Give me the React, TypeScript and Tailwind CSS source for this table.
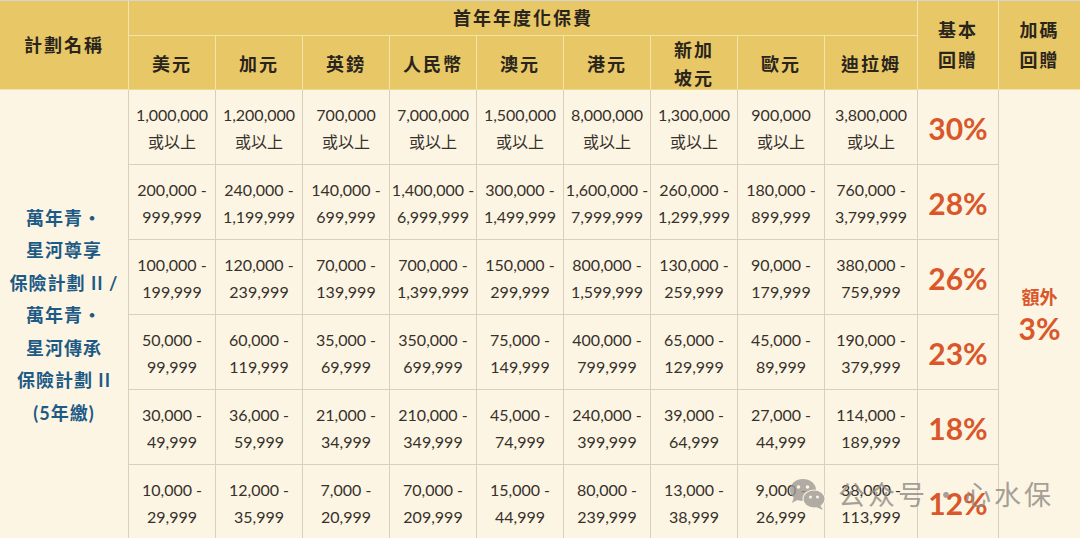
import React from "react";

const amounts: string[][] = [
  ["1,000,000|或以上", "1,200,000|或以上", "700,000|或以上", "7,000,000|或以上", "1,500,000|或以上", "8,000,000|或以上", "1,300,000|或以上", "900,000|或以上", "3,800,000|或以上"],
  ["200,000 -|999,999", "240,000 -|1,199,999", "140,000 -|699,999", "1,400,000 -|6,999,999", "300,000 -|1,499,999", "1,600,000 -|7,999,999", "260,000 -|1,299,999", "180,000 -|899,999", "760,000 -|3,799,999"],
  ["100,000 -|199,999", "120,000 -|239,999", "70,000 -|139,999", "700,000 -|1,399,999", "150,000 -|299,999", "800,000 -|1,599,999", "130,000 -|259,999", "90,000 -|179,999", "380,000 -|759,999"],
  ["50,000 -|99,999", "60,000 -|119,999", "35,000 -|69,999", "350,000 -|699,999", "75,000 -|149,999", "400,000 -|799,999", "65,000 -|129,999", "45,000 -|89,999", "190,000 -|379,999"],
  ["30,000 -|49,999", "36,000 -|59,999", "21,000 -|34,999", "210,000 -|349,999", "45,000 -|74,999", "240,000 -|399,999", "39,000 -|64,999", "27,000 -|44,999", "114,000 -|189,999"],
  ["10,000 -|29,999", "12,000 -|35,999", "7,000 -|20,999", "70,000 -|209,999", "15,000 -|44,999", "80,000 -|239,999", "13,000 -|38,999", "9,000 -|26,999", "38,000 -|113,999"],
];
const pcts = ["30%", "28%", "26%", "23%", "18%", "12%"];
const currencies = ["美元", "加元", "英鎊", "人民幣", "澳元", "港元", "新加|坡元", "歐元", "迪拉姆"];

const font = { fontFamily: "Lato, 'Noto Sans CJK TC', sans-serif" };

function WeChat() {
  return (
    <svg width="38" height="34" viewBox="0 0 38 34">
      <ellipse cx="14" cy="13" rx="13" ry="11" fill="#9e9a94" />
      <path d="M5 20 L3 26 L10 22 Z" fill="#9e9a94" />
      <circle cx="9.5" cy="10" r="1.8" fill="#fdf5e3" />
      <circle cx="18.5" cy="10" r="1.8" fill="#fdf5e3" />
      <ellipse cx="25" cy="22" rx="11.5" ry="9.5" fill="#fdf5e3" />
      <ellipse cx="25" cy="22" rx="10.5" ry="8.5" fill="#9e9a94" />
      <path d="M31 28 L34 33 L27 30 Z" fill="#9e9a94" />
      <circle cx="21.5" cy="20" r="1.5" fill="#fdf5e3" />
      <circle cx="28.5" cy="20" r="1.5" fill="#fdf5e3" />
    </svg>
  );
}

export default function App() {
  const hdr = "bg-[#e8c767] border-r border-b border-[#f4e3ad] flex items-center justify-center text-[18px] font-bold tracking-[2px] text-[#2a251c] leading-[30px] text-center";
  const body = "bg-[#fdf5e3] border-r border-b border-[#d9cfbb] flex flex-col items-center justify-center text-center";
  return (
    <div className="w-[1080px] h-[538px] overflow-hidden bg-[#fdf5e3] relative" style={font}>
      <div className="border-t border-[#d6d6d6]">
        <div className="grid grid-cols-[129px_repeat(8,87px)_93px_81px_81px] grid-rows-[35px_54px_repeat(6,75px)]">
          <div className={`${hdr} row-span-2 col-start-1 row-start-1`}>計劃名稱</div>
          <div className={`${hdr} col-span-9 col-start-2 row-start-1`}>首年年度化保費</div>
          <div className={`${hdr} row-span-2 col-start-11 row-start-1`}>
            <span>基本<br />回贈</span>
          </div>
          <div className={`${hdr} row-span-2 col-start-12 row-start-1 border-r-0`}>
            <span>加碼<br />回贈</span>
          </div>
          {currencies.map((c, i) => (
            <div key={c} className={`${hdr} row-start-2 border-b-[#f0d98e] pt-[3px]`} style={{ gridColumnStart: i + 2 }}>
              <span className="leading-[28px]">
                {c.split("|").map((l, j) => (
                  <React.Fragment key={j}>
                    {j > 0 && <br />}
                    {l}
                  </React.Fragment>
                ))}
              </span>
            </div>
          ))}
          <div className={`${body} col-start-1 row-start-3 row-span-6 text-[#1d5a86] font-bold text-[18px] leading-[32.5px] tracking-[1px] pt-[2px]`}>
            <div>萬年青・</div>
            <div>星河尊享</div>
            <div>保險計劃 II /</div>
            <div>萬年青・</div>
            <div>星河傳承</div>
            <div>保險計劃 II</div>
            <div>(5年繳)</div>
          </div>
          {amounts.map((row, r) => (
            <React.Fragment key={r}>
              {row.map((a, c) => {
                const [l1, l2] = a.split("|");
                return (
                  <div
                    key={c}
                    className={`${body} text-[16px] leading-[27.5px] text-[#36312b] whitespace-nowrap pt-[2px]`}
                    style={{ gridColumnStart: c + 2, gridRowStart: r + 3 }}
                  >
                    <div>{l1}</div>
                    <div>{l2}</div>
                  </div>
                );
              })}
              <div
                className={`${body} text-[30px] font-bold text-[#d9572a] pt-[2px]`}
                style={{ gridColumnStart: 11, gridRowStart: r + 3 }}
              >
                {pcts[r]}
              </div>
            </React.Fragment>
          ))}
          <div className={`${body} col-start-12 row-start-3 row-span-6 border-r-0 text-[#d9572a] font-bold`}>
            <div className="text-[18px] leading-[26px]">額外</div>
            <div className="text-[30px] leading-[36px]">3%</div>
          </div>
        </div>
      </div>
      <div className="absolute left-[789px] top-[477px] flex items-center whitespace-nowrap text-[27px] leading-[34px] text-[#8f8b85] opacity-80 pointer-events-none" style={{ fontFamily: "'Noto Sans CJK SC', sans-serif" }}>
        <WeChat />
        <span className="ml-[11px] tracking-[3px]">公众号</span>
        <span className="w-[36px] text-center">·</span>
        <span className="tracking-[3px]">心水保</span>
      </div>
    </div>
  );
}
